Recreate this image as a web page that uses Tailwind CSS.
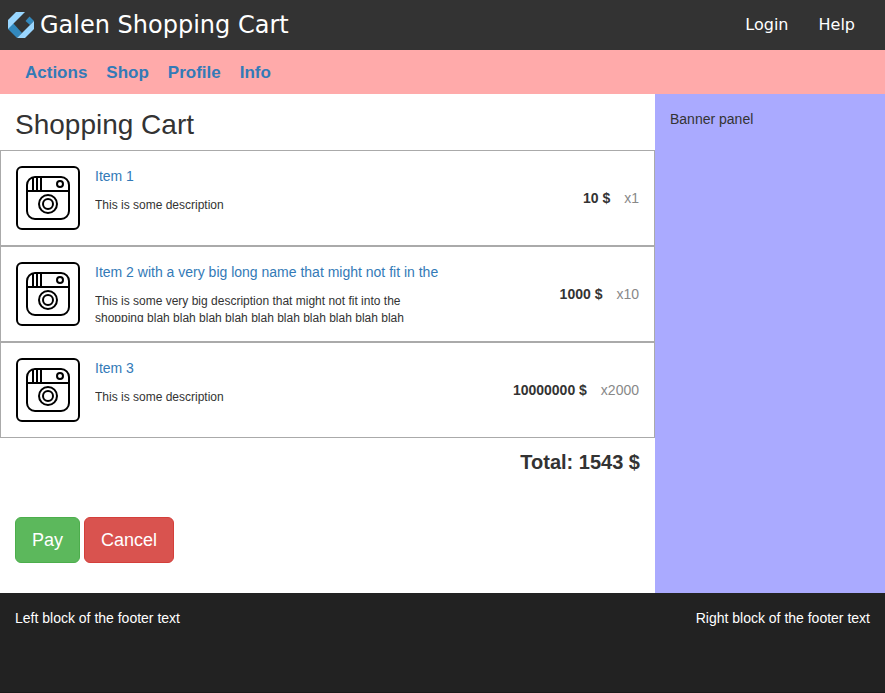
<!DOCTYPE html>
<html lang="en">
<head>
<meta charset="utf-8">
<meta name="viewport" content="width=device-width, initial-scale=1">
<title>Galen Shopping Cart</title>
<script src="https://cdn.jsdelivr.net/npm/@tailwindcss/browser@4"></script>
</head>
<body class="min-h-screen flex flex-col bg-white text-[#333] text-sm leading-5 font-['Liberation_Sans',Arial,sans-serif]">
<svg class="hidden" aria-hidden="true">
  <symbol id="camera" viewBox="0 0 64 64">
    <g fill="none" stroke="#000" stroke-width="2">
      <rect x="1" y="1" width="62" height="62" rx="5"/>
      <rect x="11" y="11" width="42" height="42" rx="8"/>
      <path d="M11 25H53M17 11V25M21 11V25M25 11V25"/>
      <circle cx="44" cy="18" r="3"/>
      <circle cx="32" cy="38" r="9"/>
      <circle cx="32" cy="38" r="5"/>
    </g>
  </symbol>
</svg>

<header class="h-[50px] shrink-0 flex items-center justify-between pl-2 pr-[30px] bg-[#333] text-white font-['DejaVu_Sans',sans-serif]">
  <a href="#" class="flex items-center gap-1.5 text-2xl">
    <svg class="size-[26px]" viewBox="0 0 26 26" aria-hidden="true">
      <path fill="#3288bd" d="M0 16L5 11L14 21L9 26L0 17Z"/>
      <path fill="#99d6ff" d="M8 0H17L0 17V8Z"/>
      <path fill="#3288bd" d="M21.500 4.500L26 9L22 13L17.500 9Z"/>
      <path fill="#99d6ff" d="M26 9V17L17 26H9Z"/>
    </svg>
    <span>Galen Shopping Cart</span>
  </a>
  <nav class="flex gap-[30px] text-base">
    <a href="#">Login</a>
    <a href="#">Help</a>
  </nav>
</header>

<nav class="h-11 shrink-0 flex items-center gap-[19px] px-[25px] pt-0.5 bg-[#faa] text-[#337ab7] text-[17px] font-bold">
  <a href="#">Actions</a>
  <a href="#">Shop</a>
  <a href="#">Profile</a>
  <a href="#">Info</a>
</nav>

<div class="grow grid grid-cols-[1fr_230px]">
  <main class="min-w-0 pb-[30px]">
    <h1 class="px-[15px] pt-[15px] pb-[9px] text-[28px] leading-8">Shopping Cart</h1>
    <ul>
      <li class="flex gap-[15px] p-[15px] border border-[#aaa]">
        <svg class="size-16 shrink-0" role="img" aria-label="Item 1"><use href="#camera"/></svg>
        <div class="w-[346px]">
          <a href="#" class="block whitespace-nowrap overflow-hidden text-[#337ab7]">Item 1</a>
          <p class="mt-[11px] h-[29px] overflow-hidden text-xs leading-[17px]">This is some description</p>
        </div>
        <div class="ml-auto flex items-center gap-3.5"><b>10 $</b><span class="text-[#888]">x1</span></div>
      </li>
      <li class="flex gap-[15px] p-[15px] border border-[#aaa]">
        <svg class="size-16 shrink-0" role="img" aria-label="Item 2"><use href="#camera"/></svg>
        <div class="w-[346px]">
          <a href="#" class="block whitespace-nowrap overflow-hidden text-[#337ab7]">Item 2 with a very big long name that might not fit in the</a>
          <p class="mt-[11px] h-[29px] overflow-hidden text-xs leading-[17px]">This is some very big description that might not fit into the shopping blah blah blah blah blah blah blah blah blah blah</p>
        </div>
        <div class="ml-auto flex items-center gap-3.5"><b>1000 $</b><span class="text-[#888]">x10</span></div>
      </li>
      <li class="flex gap-[15px] p-[15px] border border-[#aaa]">
        <svg class="size-16 shrink-0" role="img" aria-label="Item 3"><use href="#camera"/></svg>
        <div class="w-[346px]">
          <a href="#" class="block whitespace-nowrap overflow-hidden text-[#337ab7]">Item 3</a>
          <p class="mt-[11px] h-[29px] overflow-hidden text-xs leading-[17px]">This is some description</p>
        </div>
        <div class="ml-auto flex items-center gap-3.5"><b>10000000 $</b><span class="text-[#888]">x2000</span></div>
      </li>
    </ul>
    <p class="px-[15px] pt-2.5 text-right text-xl leading-7 font-bold">Total: 1543 $</p>
    <div class="mt-[41px] flex gap-1 px-[15px] text-lg leading-6 text-white">
      <button type="button" class="px-4 py-2.5 rounded-md border border-[#4cae4c] bg-[#5cb85c]">Pay</button>
      <button type="button" class="px-4 py-2.5 rounded-md border border-[#d43f3a] bg-[#d9534f]">Cancel</button>
    </div>
  </main>
  <aside class="p-[15px] bg-[#aaf]">Banner panel</aside>
</div>

<footer class="h-[100px] shrink-0 flex justify-between p-[15px] bg-[#222] text-white border-b border-[#1a1a1a]">
  <p>Left block of the footer text</p>
  <p>Right block of the footer text</p>
</footer>
</body>
</html>
